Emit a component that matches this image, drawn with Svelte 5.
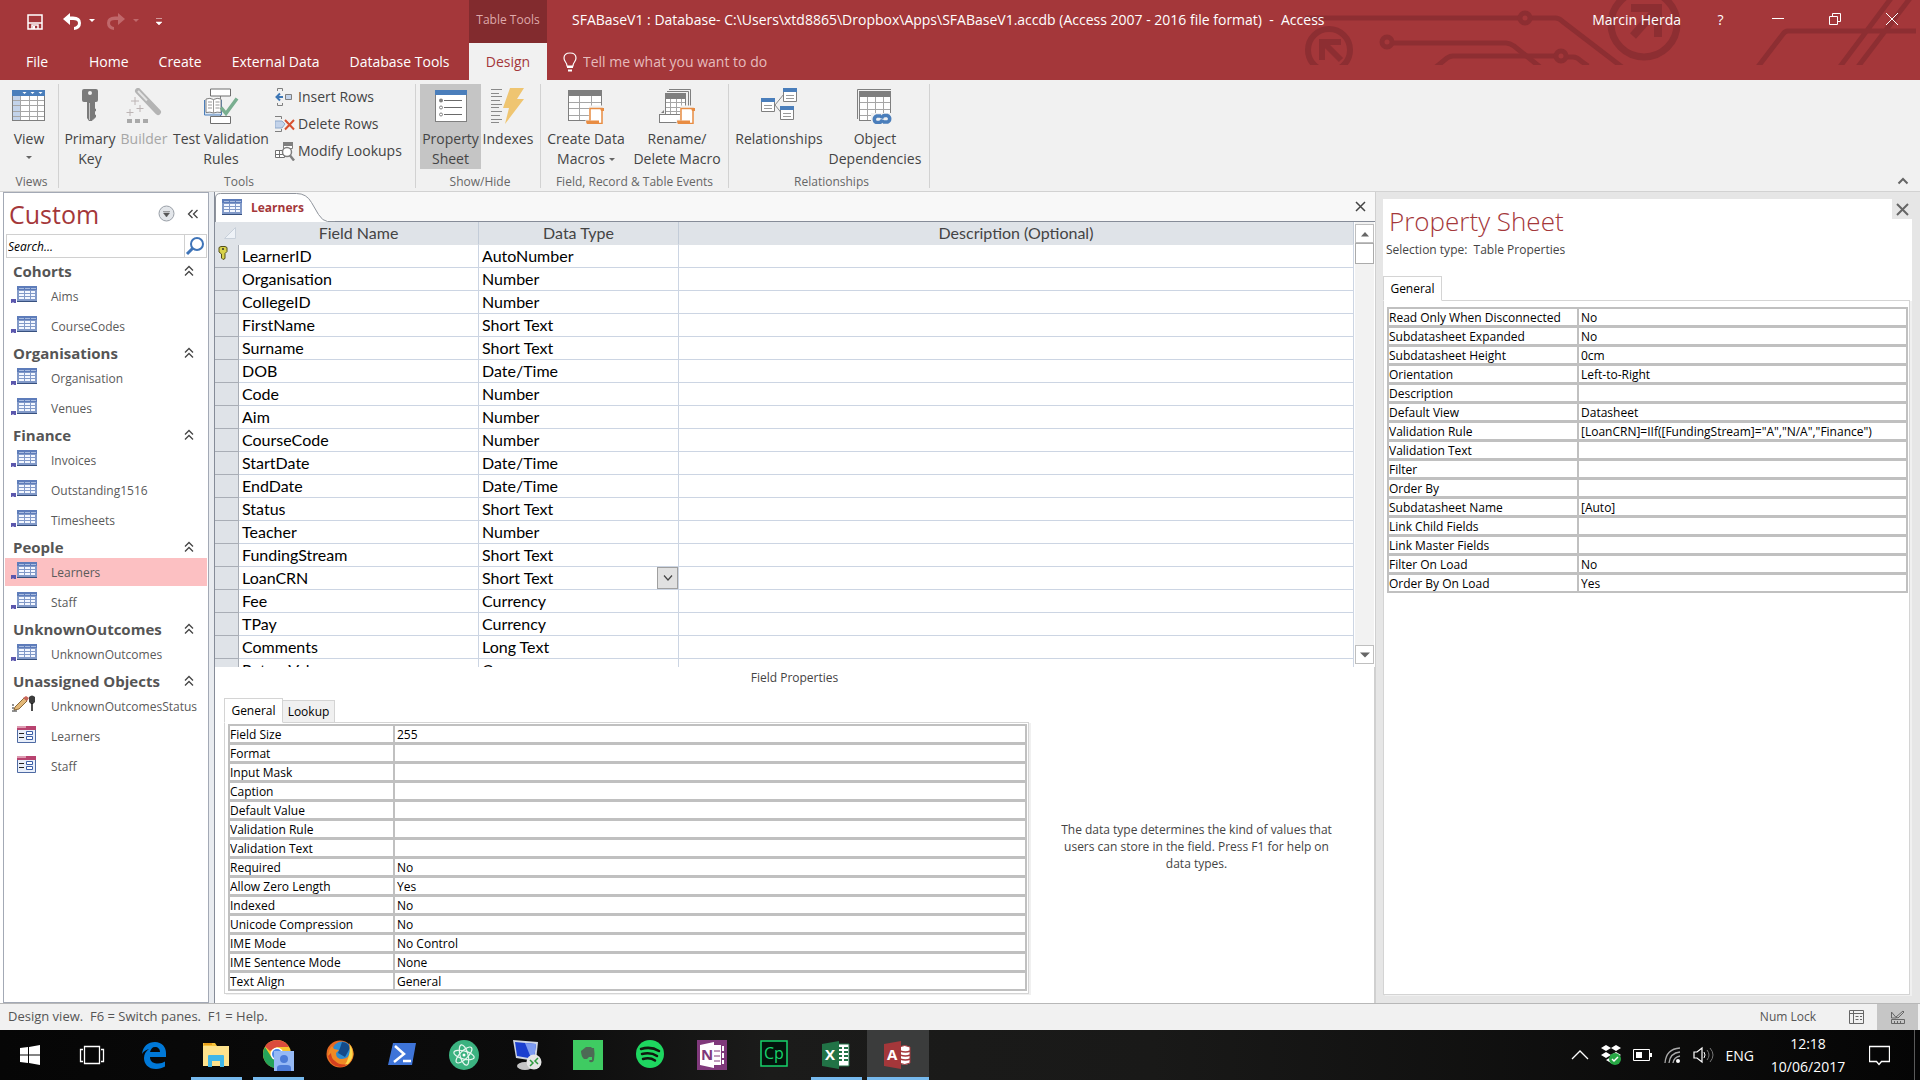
<script>
  const tabs = ['Home', 'Create', 'External Data', 'Database Tools'];

  const ribbon = [
    { label: 'Views', cls: 'views', items: [{ icon: 'view', lines: ['View'], w: 'w48', drop: true }] },
    {
      label: 'Tools',
      cls: 'tools',
      items: [
        { icon: 'key', lines: ['Primary', 'Key'], w: 'w54' },
        { icon: 'wand', lines: ['Builder'], w: 'w54', disabled: true },
        { icon: 'validate', lines: ['Test Validation', 'Rules'], w: 'w100' }
      ],
      small: [
        { icon: 'insert', text: 'Insert Rows' },
        { icon: 'delete', text: 'Delete Rows' },
        { icon: 'lookup', text: 'Modify Lookups' }
      ]
    },
    {
      label: 'Show/Hide',
      cls: 'show',
      items: [
        { icon: 'sheet', lines: ['Property', 'Sheet'], w: 'w61', active: true },
        { icon: 'indexes', lines: ['Indexes'], w: 'w54' }
      ]
    },
    {
      label: 'Field, Record & Table Events',
      cls: 'events',
      items: [
        { icon: 'macro', lines: ['Create Data', 'Macros'], w: 'w90', inlineDrop: true },
        { icon: 'rename', lines: ['Rename/', 'Delete Macro'], w: 'w92' }
      ]
    },
    {
      label: 'Relationships',
      cls: 'rel',
      items: [
        { icon: 'relations', lines: ['Relationships'], w: 'w90' },
        { icon: 'depend', lines: ['Object', 'Dependencies'], w: 'w102' }
      ]
    }
  ];

  const nav = [
    { name: 'Cohorts', items: [['table', 'Aims'], ['table', 'CourseCodes']] },
    { name: 'Organisations', items: [['table', 'Organisation'], ['table', 'Venues']] },
    { name: 'Finance', items: [['table', 'Invoices'], ['table', 'Outstanding1516'], ['table', 'Timesheets']] },
    { name: 'People', items: [['table', 'Learners', true], ['table', 'Staff']] },
    { name: 'UnknownOutcomes', items: [['table', 'UnknownOutcomes']] },
    { name: 'Unassigned Objects', items: [['query', 'UnknownOutcomesStatus'], ['form', 'Learners'], ['form', 'Staff']] }
  ];

  const fields = [
    ['LearnerID', 'AutoNumber'], ['Organisation', 'Number'], ['CollegeID', 'Number'],
    ['FirstName', 'Short Text'], ['Surname', 'Short Text'], ['DOB', 'Date/Time'],
    ['Code', 'Number'], ['Aim', 'Number'], ['CourseCode', 'Number'],
    ['StartDate', 'Date/Time'], ['EndDate', 'Date/Time'], ['Status', 'Short Text'],
    ['Teacher', 'Number'], ['FundingStream', 'Short Text'], ['LoanCRN', 'Short Text'],
    ['Fee', 'Currency'], ['TPay', 'Currency'], ['Comments', 'Long Text'], ['ReturnValue', 'Currency']
  ];

  const fieldProps = [
    ['Field Size', '255'], ['Format', ''], ['Input Mask', ''], ['Caption', ''],
    ['Default Value', ''], ['Validation Rule', ''], ['Validation Text', ''], ['Required', 'No'],
    ['Allow Zero Length', 'Yes'], ['Indexed', 'No'], ['Unicode Compression', 'No'],
    ['IME Mode', 'No Control'], ['IME Sentence Mode', 'None'], ['Text Align', 'General']
  ];

  const tableProps = [
    ['Read Only When Disconnected', 'No'], ['Subdatasheet Expanded', 'No'], ['Subdatasheet Height', '0cm'],
    ['Orientation', 'Left-to-Right'], ['Description', ''], ['Default View', 'Datasheet'],
    ['Validation Rule', '[LoanCRN]=IIf([FundingStream]="A","N/A","Finance")'], ['Validation Text', ''],
    ['Filter', ''], ['Order By', ''], ['Subdatasheet Name', '[Auto]'], ['Link Child Fields', ''],
    ['Link Master Fields', ''], ['Filter On Load', 'No'], ['Order By On Load', 'Yes']
  ];

  const apps = [
    ['taskview', 'Task View'], ['edge', 'Edge'], ['folder', 'File Explorer', 'open'], ['chrome', 'Chrome', 'open'],
    ['firefox', 'Firefox'], ['powershell', 'PowerShell'], ['atom', 'Atom'], ['remote', 'Remote Desktop'],
    ['evernote', 'Evernote'], ['spotify', 'Spotify'], ['onenote', 'OneNote'], ['captivate', 'Captivate'],
    ['excel', 'Excel', 'open'], ['access', 'Access', 'current']
  ];
</script>

{#snippet grid(x, y, w, h, cols, rows, head, side)}
  <rect x={x + 0.5} y={y + 0.5} width={w - 1} height={h - 1} fill="#fff" stroke="#7f7f7f" />
  {#if side}<rect x={x + 1} y={y + 5} width="8" height={h - 6} fill="#c3d3ea" />{/if}
  {#each Array(cols - 1) as _, i}
    <path d="M{x + Math.round(((i + 1) * w) / cols) + 0.5} {y + 5}v{h - 6}" stroke="#a6a6a6" />
  {/each}
  {#each Array(rows - 1) as _, i}
    <path d="M{x + 1} {y + 5 + Math.round(((i + 1) * (h - 5)) / rows) + 0.5}h{w - 2}" stroke="#a6a6a6" />
  {/each}
  <rect {x} {y} width={w} height="6" fill={head} />
{/snippet}

{#snippet scroll(x, y)}
  <path d="M{x + 5} {y}h13v4h-2v14h-15v-4h3z" fill="#f1f1f1" stroke="#f1f1f1" stroke-width="3" />
  <path d="M{x + 4} {y + 13.5}V{y + 1.5}h12v15h-4" fill="#fff" stroke="#e88c42" stroke-width="1.5" />
  <path d="M{x + 14} {y + 1}h4v3h-3z" fill="#e88c42" />
  <path d="M{x} {y + 13.5}h13v2.5q0 2 2 2.500h-12q-3-1-3-5z" fill="#e88c42" />
{/snippet}

{#snippet big(name)}
  <svg class="big-icon" viewBox="0 0 36 36" aria-hidden="true">
    {#if name === 'view'}
      {@render grid(1, 2, 33, 31, 4, 5, '#4a7ebb', true)}
      <path d="M11.500 4h4l-2 2zM19.500 4h4l-2 2zM27.500 4h4l-2 2z" fill="#fff" />
    {:else if name === 'key'}
      <path fill-rule="evenodd" d="M12 1h12q2 0 2 2v9q0 2-2 2h-1v14l-3 5h-3l-2-3V14h-3q-2 0-2-2V3q0-2 2-2zM18 3a2 2 0 100 4 2 2 0 000-4z" fill="#7b7b7b" />
      <path d="M17.500 15v17" stroke="#c8c8c8" />
      <path d="M22 20l2 1v2l-2 1v2l2 1v2l-3 3" fill="#7b7b7b" />
    {:else if name === 'wand'}
      <path d="M12 3l20 21" stroke="#b4b4b4" stroke-width="6" stroke-linecap="round" />
      <path d="M12 3l9 9.500" stroke="#e4e4e4" stroke-width="2" />
      <path d="M9 9v8M5 13h8M14 17v7M10.500 20.500h7M4 21v7M.5 24.500h7" stroke="#bcb4b4" />
      <path d="M1 31h5v4H1zM9 31h5v4H9zM17 31h5v4h-5z" fill="#a9a9a9" />
    {:else if name === 'validate'}
      <path d="M17.500 8v3M17.500 25v5" stroke="#7f7f7f" />
      <path d="M7.500 1h20v7h-20zM7.500 28.500h20v7h-20z" fill="#fff" stroke="#6f6f6f" />
      <path d="M1.500 12v15h17V12" fill="#d9e5f3" stroke="#4a7ebb" />
      <path d="M3 11q4-1.500 7.500.5Q14 9.500 18 11v13.500q-4-1-7.500.5Q7 23.500 3 24.500z" fill="#fff" stroke="#7f7f7f" />
      <path d="M10.500 12v13M5 14h4M5 17h4M5 20h4M12.500 14h4M12.500 17h4M12.500 20h4" stroke="#999" />
      <path d="M18 19.500l5 6 11-15" fill="none" stroke="#79ae90" stroke-width="3.500" />
    {:else if name === 'sheet'}
      <rect x="2.500" y="2.500" width="31" height="31" fill="#fff" stroke="#7f7f7f" />
      <path d="M2 2h32v5H2z" fill="#4a7ebb" />
      <path d="M11 12.500h18M11 19.500h18M11 26.500h18" stroke="#6a6a6a" />
      <circle cx="8" cy="12.500" r="2" fill="#7f7f7f" />
      <circle cx="8" cy="19.500" r="1.500" fill="#fff" stroke="#7f7f7f" />
      <circle cx="8" cy="26.500" r="1.500" fill="#fff" stroke="#7f7f7f" />
    {:else if name === 'indexes'}
      <path d="M1 1.500h11M1 5.500h8M1 8.500h11M1 12.500h9M1 16.500h11M1 19.500h8M1 23.500h11M1 27.500h9M1 31.500h11M1 34.500h8" stroke="#8a8a8a" />
      <path d="M20 0h14l-7 11h7L15 36l4-16h-6z" fill="#efc571" />
    {:else if name === 'macro'}
      {@render grid(0, 2, 34, 31, 3, 4, '#7f7f7f', false)}
      {@render scroll(18, 19)}
    {:else if name === 'rename'}
      <path d="M10 1.500h21.500V18" fill="none" stroke="#7f7f7f" />
      <path d="M8 3.500h21.500V18" fill="none" stroke="#7f7f7f" />
      {@render grid(6, 5, 21, 22, 4, 4, '#7f7f7f', false)}
      <rect x=".5" y="26.500" width="24" height="8" fill="#fff" stroke="#7f7f7f" />
      <path d="M2 25l3-3v3z" fill="#7f7f7f" />
      {@render scroll(18, 19)}
    {:else if name === 'relations'}
      <path d="M14 17L23 6M14 17l8 10" stroke="#8a8a8a" fill="none" />
      <path d="M.5 10.500h13v13H.5zM22.500.5h13v13h-13zM19.500 18.500h13v13h-13z" fill="#fff" stroke="#7f7f7f" />
      <path d="M0 10h14v4H0zM22 0h14v4H22zM19 18h14v4H19z" fill="#4a7ebb" />
      <path d="M3 17.500h8M3 20.500h8M25 7.500h8M25 10.500h8M22 25.500h8M22 28.500h8" stroke="#9a9a9a" />
    {:else if name === 'depend'}
      <path d="M.5 31V1.500H34" fill="none" stroke="#7f7f7f" />
      {@render grid(2, 3, 32, 30, 4, 4, '#7f7f7f', false)}
      <path d="M14 25h22v11H14z" fill="#f1f1f1" />
      <g fill="none" stroke="#4a7ebb" stroke-width="3.500">
        <path d="M24 28h-4.500a3.500 3.500 0 000 6.500h3a4 4 0 003-3" />
        <path d="M26 34h4.500a3.500 3.500 0 000-6.500h-3a4 4 0 00-3 3" />
      </g>
    {/if}
  </svg>
{/snippet}

{#snippet little(name)}
  <svg class="small-icon" viewBox="0 0 20 20" aria-hidden="true">
    {#if name === 'insert'}
      <path d="M2.500 4V1.500h5V4M2.500 16v2.500h5V16" fill="none" stroke="#7f7f7f" />
      <path d="M10.500 7.500h6v5h-6z" fill="#c3d3ea" stroke="#7f7f7f" />
      <path d="M8 10H2M5 6.500L1.500 10 5 13.500" fill="none" stroke="#3c76b5" stroke-width="2" />
    {:else if name === 'delete'}
      <path d="M0 2.500h6.500V5M0 17.500h6.500V15" fill="none" stroke="#7f7f7f" />
      <path d="M0 7h7l3 3-3 4H0z" fill="#c3d3ea" stroke="#8fa9cc" />
      <path d="M10 6l9 9.500M19 6l-9 9.500" stroke="#d7502f" stroke-width="2" />
    {:else}
      <path d="M8.500 1.500h9v6h-9z" fill="#fff" stroke="#7f7f7f" />
      <path d="M8 1h10v4H8z" fill="#7f7f7f" />
      <path d="M.5 9.500h9v7h-9zM.5 13.500h9M4.500 9.500v7" fill="#fff" stroke="#6f6f6f" />
      <circle cx="12" cy="11" r="4.500" fill="#fff" stroke="#7f7f7f" stroke-width="1.500" />
      <path d="M15 14.500l4 5" stroke="#7f7f7f" stroke-width="2.500" />
    {/if}
  </svg>
{/snippet}

{#snippet objectIcon(name)}
  <svg class="object-icon" viewBox="0 0 28 20" aria-hidden="true">
    {#if name === 'table' || name === 'doc'}
      {#if name === 'table'}
        <path d="M1 14h5v4H4l-1-1-1 1H1z" fill="#5b57ad" />
      {/if}
      <rect x="7" y="1" width="20" height="16" fill="#8199c8" />
      <rect x="7" y="1" width="20" height="4" fill="#5d7cba" />
      <path d="M9 3h5v1H9zM15 3h5v1h-5zM21 3h5v1h-5z" fill="#a9bce0" />
      <path d="M9 6h5v2H9zM15 6h5v2h-5zM21 6h4v2h-4zM9 9h5v2H9zM15 9h5v2h-5zM21 9h4v2h-4zM9 12h5v2H9zM15 12h5v2h-5zM21 12h4v2h-4z" fill="#f3f7ff" />
      <path d="M7 16h20v1H7z" fill="#37517f" />
    {:else if name === 'query'}
      <path d="M5 12l9-9 3 3-8 8-5 1z" fill="#e3b878" stroke="#8b6a3a" />
      <path d="M13 3l3-2 3 2-2 3z" fill="#c8665a" />
      <path d="M2 10h2M2 13h2M2 16h5" stroke="#222" />
      <path d="M19 2q3-3 6 0v5l-2 2h-2l-2-2z" fill="#3c3c3c" />
      <path d="M22 8v8" stroke="#111" stroke-width="1.500" />
    {:else}
      <path d="M7.500 1.500h18v16h-18z" fill="#e9effa" stroke="#4e6aa3" />
      <path d="M7 1h19v4H7z" fill="#b8436f" />
      <path d="M7 1h9v2H7z" fill="#dd9ab1" />
      <path d="M9 8.500h5M9 12.500h5" stroke="#222" />
      <path d="M16.500 6.500h6v3h-6zM16.500 11.500h6v3h-6z" fill="#fff" stroke="#3b5ea8" />
    {/if}
  </svg>
{/snippet}

{#snippet app(name)}
  <svg class="app-icon" viewBox="0 0 32 32" aria-hidden="true">
    {#if name === 'taskview'}
      <path d="M8.500 7.500h15v17h-15zM7 10.500H4.500v12H7M25 10.500h2.500v12H25" fill="none" stroke="#fff" stroke-width="1.300" />
    {:else if name === 'edge'}
      <path d="M4 15C5 7 10 3 17 3c7 0 11 5 11 11v4H12c0 5 4 6.500 8 6.500 3 0 5-1 7-2v5c-3 1.500-5 2.500-9 2.500-8 0-12-5-12-11 0-4 2-7 5-9-3 1-5 2-7 5zm8-2h10c0-3-2-5-5-5s-4 2-5 5z" fill="#0078d7" />
    {:else if name === 'folder'}
      <path d="M3 4h12l2 3h12v20H3z" fill="#f5c33b" />
      <path d="M3 7h26v20H3z" fill="#fde28c" />
      <path d="M4 4h8v2H4z" fill="#e89f1d" />
      <path d="M8 17q0-1 1-1h14q1 0 1 1v11h-4v-6h-8v6H8z" fill="#3fb6e8" />
    {:else if name === 'chrome'}
      <circle cx="15" cy="15" r="14" fill="#f9c42e" />
      <path d="M15 1a14 14 0 0112 7H15l-7 4-5-4.500A14 14 0 0115 1z" fill="#db4b3c" />
      <path d="M3 8l7 11 5 3-2 7A14 14 0 013 8z" fill="#24a35a" />
      <circle cx="15" cy="15" r="6.500" fill="#fff" /><circle cx="15" cy="15" r="5" fill="#4a86e8" />
      <path d="M12 12h20v21H12z" fill="#96b9f5" />
      <circle cx="22" cy="20" r="4" fill="#4d7cd8" /><path d="M15 32v-3q0-3 4-3h6q4 0 4 3v3z" fill="#4d7cd8" />
    {:else if name === 'firefox'}
      <circle cx="16" cy="15" r="13.500" fill="#e66a22" />
      <circle cx="18" cy="12" r="9.500" fill="#2d8bd0" />
      <path d="M18 3q6 0 8 6l-5 9-7-4 2-5z" fill="#134a8a" />
      <path d="M25 4q6 7 4 14-3 9-12 10-12 0-13-12 1-6 4-9l2 3 5 1-3 3q0 6 6 6 8-1 8-8z" fill="#f08a24" />
      <path d="M26 6q4 6 2 13-3 7-8 8 6-7 6-21z" fill="#fbd84b" />
      <path d="M4 17q2 10 12 11 5 0 8-3-8 2-13-3-4-3-4-8z" fill="#d5401f" />
    {:else if name === 'powershell'}
      <path d="M7 4h23l-4 22H2z" fill="#3e74d8" />
      <path d="M9 7l9 8-10 8M17 22h8" fill="none" stroke="#fff" stroke-width="2.500" />
    {:else if name === 'atom'}
      <circle cx="16" cy="16" r="15" fill="#3bb280" />
      <g fill="none" stroke="#e8f7f0" stroke-width="1.200"><ellipse cx="16" cy="16" rx="10.500" ry="4" transform="rotate(15 16 16)" /><ellipse cx="16" cy="16" rx="10.500" ry="4" transform="rotate(75 16 16)" /><ellipse cx="16" cy="16" rx="10.500" ry="4" transform="rotate(135 16 16)" /></g>
      <circle cx="16" cy="16" r="1.500" fill="#fff" />
    {:else if name === 'remote'}
      <path d="M3 1l25 2-2 19-20-3z" fill="#cfd6e2" /><path d="M5 3l21 2-2 15-17-3z" fill="#1b3fcf" /><path d="M15 4l11 1-2 15-3-1z" fill="#7d9bf0" />
      <ellipse cx="15" cy="27" rx="8" ry="4" fill="#c4c4c4" />
      <circle cx="24" cy="23" r="7.500" fill="#e6e6e6" /><path d="M20 21l3 3-3 3M28 19l-3 3 3 3" fill="none" stroke="#2f9a3f" stroke-width="1.500" />
    {:else if name === 'evernote'}
      <path d="M1 1h30v30H1z" fill="#3fcb62" />
      <path d="M9 12l5-4h5l1 1h2q1 5 0 12-1 3-4 2-2-1 0-2h2v-3h-3l-2 2h-3q-3-3-3-8z" fill="#4d6a55" />
    {:else if name === 'spotify'}
      <circle cx="16" cy="15" r="14" fill="#1ed760" />
      <path d="M7 10q10-3 18 2M8 15q9-2 15 2M9 20q7-2 12 1.500" fill="none" stroke="#10180f" stroke-width="2.500" stroke-linecap="round" />
    {:else if name === 'onenote'}
      <path d="M1 1h30v30H1z" fill="#80397b" />
      <path d="M18 6h7v20h-7zM26 7h2v5h-2zM26 14h2v5h-2zM26 21h2v4h-2z" fill="#fff" />
      <path d="M18 12h6M18 17h6M18 22h6" stroke="#80397b" />
      <path d="M4 6l14-3v26L4 26z" fill="#fff" />
      <text x="5" y="21" class="glyph" fill="#80397b">N</text>
    {:else if name === 'captivate'}
      <rect x="3" y="2" width="26" height="25" fill="#03140c" stroke="#17d36b" stroke-width="1.500" />
      <text x="6" y="20" class="glyph thin" fill="#17d36b">Cp</text>
    {:else if name === 'excel'}
      <path d="M17 5h12v22H17z" fill="#fff" stroke="#217346" />
      <path d="M18 9h4M18 13h4M18 17h4M18 21h4M24 9h4M24 13h4M24 17h4M24 21h4" stroke="#217346" stroke-width="2" />
      <path d="M2 5l17-3v28L2 27z" fill="#217346" />
      <text x="5" y="21" class="glyph" fill="#fff">X</text>
    {:else}
      <path d="M17 8q6-3 11 0v16q-5 3-11 0z" fill="#fff" stroke="#a4373a" />
      <path d="M18 12q6 2 10 0M18 16q6 2 10 0M18 20q6 2 10 0" fill="none" stroke="#a4373a" stroke-width="1.500" />
      <path d="M2 5l17-3v28L2 27z" fill="#a4373a" />
      <text x="5" y="21" class="glyph" fill="#fff">A</text>
    {/if}
  </svg>
{/snippet}

{#snippet propertyGrid(rows, id)}
  <div class="props {id}">
    {#each rows as [label, value], i}
      <label for="{id}{i}">{label}</label>
      <input id="{id}{i}" type="text" {value} />
    {/each}
  </div>
{/snippet}

<div class="window">
  <header>
    <svg class="circuit" viewBox="0 0 620 65" aria-hidden="true">
      <g fill="none" stroke="#8d2e32" stroke-width="5">
        <path d="M5 18h215M230 18h25q4 0 7 3l60 46" />
        <circle cx="225" cy="18" r="5" />
        <circle cx="29" cy="50" r="21" stroke-width="6" />
        <path d="M41 42H22v18M23 42l18 18" stroke-width="6" />
        <circle cx="87" cy="42" r="5" />
        <path d="M92 43h114q4 0 8 3l26 21" />
        <path d="M136 67l11-9q3-2 6-2h103M266 57h7q4 0 8 4l7 5" />
        <circle cx="261" cy="56" r="5" />
        <circle cx="344" cy="24" r="33" stroke-width="7" />
        <path d="M331 8h27v29M357 9l-24 27" stroke-width="8" />
        <path d="M457 68l26-34q2-3 5-3h128M539 68L592-3M557 68L611-3" />
      </g>
    </svg>
    <div class="titlebar">
      <div class="quick">
        <button aria-label="Save"><svg width="16" height="16" viewBox="0 0 16 16"><path d="M1 1h14v14H1zM1 9h14M5 15v-4h6v4" fill="none" stroke="#fff" stroke-width="1.500" /><path d="M6 12h2v3H6z" fill="#fff" /></svg></button>
        <button aria-label="Undo" class="undo"><svg width="34" height="18" viewBox="0 0 34 18"><path d="M0 6l7-6v3.500h3q8 0 8 6.500 0 6-7 7v-3q4-1 4-4 0-3-5-3H7v5z" fill="#fff" /><path d="M26 6h6l-3 3z" fill="#fff" /></svg></button>
        <button aria-label="Redo" class="redo"><svg width="34" height="18" viewBox="0 0 34 18"><path d="M18 6l-7-6v3.500H8q-8 0-8 6.500 0 6 7 7v-3q-4-1-4-4 0-3 5-3h3v5z" fill="#c0686b" /><path d="M26 6h6l-3 3z" fill="#c0686b" /></svg></button>
        <button aria-label="Customise toolbar"><svg width="8" height="10" viewBox="0 0 8 10"><path d="M1 1.500h6M1 5h6L4 8z" fill="#fff" stroke="#fff" stroke-width=".5" /></svg></button>
      </div>
      <div class="context">Table Tools</div>
      <h1>SFABaseV1 : Database- C:\Users\xtd8865\Dropbox\Apps\SFABaseV1.accdb (Access 2007 - 2016 file format)&nbsp; -&nbsp; Access</h1>
      <span class="user">Marcin Herda</span>
      <div class="controls">
        <button aria-label="Help">?</button>
        <button aria-label="Minimise"><svg width="14" height="14"><path d="M1 6.500h12" stroke="#fff" /></svg></button>
        <button aria-label="Restore"><svg width="14" height="14"><path d="M1.500 4.500h8v8h-8zM4.500 4V1.500h8v8H10" fill="none" stroke="#fff" /></svg></button>
        <button aria-label="Close"><svg width="14" height="14"><path d="M1 1l12 12M13 1L1 13" stroke="#fff" /></svg></button>
      </div>
    </div>
    <nav class="tabs">
      <div class="maintabs">
        <button class="file">File</button>
        {#each tabs as t}<button>{t}</button>{/each}
      </div>
      <button class="selected">Design</button>
      <label class="tell">
        <svg width="14" height="20" viewBox="0 0 14 20" aria-hidden="true"><path d="M4 14q0-2-1.500-4T1 6q0-5 6-5t6 5q0 2-1.500 4T10 14z" fill="none" stroke="#fff" stroke-width="1.200" /><path d="M4 15h6M5 18.500h4" stroke="#fff" stroke-width="2" /></svg>
        <input type="text" placeholder="Tell me what you want to do" aria-label="Tell me what you want to do" />
      </label>
    </nav>
  </header>

  <section class="ribbon">
    {#each ribbon as g}
      <div class="group {g.cls}">
        <div class="commands">
          {#each g.items as b}
            <button class="cmd {b.w}" class:active={b.active} disabled={b.disabled}>
              {@render big(b.icon)}
              {#each b.lines as line, i}
                <span>{line}{#if b.inlineDrop && i === 1}<i class="caret inline"></i>{/if}</span>
              {/each}
              {#if b.drop}<i class="caret"></i>{/if}
            </button>
          {/each}
          {#if g.small}
            <div class="stack">
              {#each g.small as s}
                <button>{@render little(s.icon)}{s.text}</button>
              {/each}
            </div>
          {/if}
        </div>
        <div class="caption">{g.label}</div>
      </div>
    {/each}
    <button class="collapse" aria-label="Collapse ribbon"><svg width="12" height="8"><path d="M1.500 6.500L6 2l4.500 4.500" fill="none" stroke="#666" stroke-width="2" /></svg></button>
  </section>

  <main>
    <aside class="navpane">
      <div class="navhead">
        <h2>Custom</h2>
        <button aria-label="Navigation options"><svg width="17" height="17"><circle cx="8.500" cy="8.500" r="7.500" fill="#e3e6ea" stroke="#9aa0a8" /><path d="M5 6.500h7M5.500 8h6l-3 4z" fill="#555" stroke="#555" stroke-width=".5" /></svg></button>
        <button aria-label="Collapse pane"><svg width="12" height="10"><path d="M5.500 1L1.500 5l4 4M10.500 1l-4 4 4 4" fill="none" stroke="#444" stroke-width="1.300" /></svg></button>
      </div>
      <div class="search">
        <input type="text" placeholder="Search..." aria-label="Search" />
        <button aria-label="Search"><svg width="20" height="20"><circle cx="12" cy="8" r="6" fill="none" stroke="#3f74b8" stroke-width="2" /><path d="M8 12l-6 6" stroke="#3f74b8" stroke-width="3" /></svg></button>
      </div>
      {#each nav as g}
        <button class="navgroup">{g.name}<svg width="10" height="12"><path d="M1 5.500L5 1.500l4 4M1 10.500l4-4 4 4" fill="none" stroke="#444" stroke-width="1.300" /></svg></button>
        {#each g.items as [icon, label, on]}
          <button class="navitem" class:on>{@render objectIcon(icon)}<span>{label}</span></button>
        {/each}
      {/each}
    </aside>
    <div class="splitter"></div>

    <section class="document">
      <div class="doctabs">
        <button class="doctab">
          <svg class="tabshape" width="120" height="30" aria-hidden="true"><path d="M.5 30V6q0-4.500 5-4.500h76q10 0 15 9l7 12q4 6 9 6h7.500V30z" fill="#fff" /><path d="M.5 30V6q0-4.500 5-4.500h76q10 0 15 9l7 12q4 6.500 9 7h7.500" fill="none" stroke="#8f949c" /></svg>
          {@render objectIcon('doc')}<span>Learners</span>
        </button>
        <button class="docclose" aria-label="Close document"><svg width="11" height="11"><path d="M1 1l9 9M10 1l-9 9" stroke="#444" stroke-width="1.500" /></svg></button>
      </div>
      <div class="design">
        <div class="clip">
          <table>
            <colgroup><col class="c0" /><col class="c1" /><col class="c2" /><col /></colgroup>
            <thead>
              <tr>
                <th aria-label="Row selector"><svg width="12" height="12"><path d="M11.500.5v11H.5z" fill="#eef2f7" stroke="#c8d0da" /></svg></th>
                <th>Field Name</th><th>Data Type</th><th>Description (Optional)</th>
              </tr>
            </thead>
            <tbody>
              {#each fields as [name, type], i}
                <tr>
                  <th>
                    {#if i === 0}<svg class="pk" width="10" height="14"><path d="M1 1.500L3 .5h4l2 1v4L7 7.500v5L5 13.500 3.500 12V8L1 6z" fill="#d8d24a" stroke="#55501a" /><circle cx="5" cy="3" r="1" fill="#333" /></svg>{/if}
                  </th>
                  <td>{name}</td>
                  <td><div class="type">{type}{#if name === 'LoanCRN'}<button aria-label="Choose data type"><svg width="10" height="8"><path d="M1 1.500l4 4.500 4-4.500" fill="none" stroke="#444" stroke-width="1.200" /></svg></button>{/if}</div></td>
                  <td></td>
                </tr>
              {/each}
            </tbody>
          </table>
        </div>
        <div class="scrollbar">
          <button aria-label="Scroll up"><svg width="10" height="6"><path d="M1 5.500h8L5 1z" fill="#666" /></svg></button>
          <div class="thumb"></div>
          <button class="down" aria-label="Scroll down"><svg width="10" height="6"><path d="M0 .5h10L5 5.500z" fill="#666" /></svg></button>
        </div>
      </div>
      <div class="lower">
        <h3>Field Properties</h3>
        <div class="lowerrow">
          <div class="tabbed">
            <div class="minitabs"><button class="front">General</button><button class="back">Lookup</button></div>
            <div class="panel">{@render propertyGrid(fieldProps, 'fp')}</div>
          </div>
          <p>The data type determines the kind of values that users can store in the field. Press F1 for help on data types.</p>
        </div>
      </div>
    </section>

    <aside class="sheet">
      <div class="sheetbody">
        <div class="sheethead">
          <h2>Property Sheet</h2>
          <button aria-label="Close property sheet"><svg width="13" height="13"><path d="M1 1l11 11M12 1L1 12" stroke="#666" stroke-width="2" /></svg></button>
        </div>
        <p>Selection type:&nbsp; Table Properties</p>
        <div class="minitabs"><button class="front">General</button></div>
        <div class="panel">{@render propertyGrid(tableProps, 'tp')}</div>
      </div>
    </aside>
  </main>

  <footer class="status">
    <span>Design view.&nbsp; F6 = Switch panes.&nbsp; F1 = Help.</span>
    <span class="num">Num Lock</span>
    <button aria-label="Datasheet view"><svg width="15" height="14"><path d="M.5.5h14v13H.5zM.5 3.500h14M4.500.5v13M6.500 6.500h3M11 6.500h2M6.500 9.500h3M11 9.500h2" fill="none" stroke="#666" /></svg></button>
    <button class="on" aria-label="Design view"><svg width="16" height="15"><path d="M1.500 2v6h5zM6 7l7-6 1 1-6 6zM1.500 9.500h13v4h-13zM4.500 11v2M7.500 11v2M10.500 11v2" fill="none" stroke="#666" /></svg></button>
  </footer>

  <footer class="taskbar">
    <button class="start" aria-label="Start"><svg width="20" height="20"><path d="M0 3l8-1v7.500H0zM9 2l11-2v9.500H9zM0 10.500h8V18l-8-1zM9 10.500h11V20L9 18z" fill="#fff" /></svg></button>
    {#each apps as [icon, label, state]}
      <button class="app {state ?? ''}" aria-label={label}>{@render app(icon)}</button>
    {/each}
    <div class="tray">
      <button aria-label="Hidden icons"><svg width="18" height="10"><path d="M1 9l8-8 8 8" fill="none" stroke="#fff" stroke-width="1.300" /></svg></button>
      <button aria-label="Dropbox"><svg width="20" height="20"><path d="M5 0l5 3-5 3-5-3zM15 0l5 3-5 3-5-3zM5 7l5 3-5 3-5-3zM15 7l5 3-5 3-5-3zM10 12l4 3-4 3-5-3z" fill="#fff" /><circle cx="14" cy="14" r="6" fill="#28a745" /><path d="M11 14l2 2 4-4" fill="none" stroke="#fff" stroke-width="1.500" /></svg></button>
      <button aria-label="Battery"><svg width="19" height="12"><path d="M.5.5h16v11H.5z" fill="none" stroke="#fff" /><path d="M17 4h2v4h-2zM3 3h6v6H3z" fill="#fff" /></svg></button>
      <button aria-label="Wi-Fi"><svg width="17" height="17"><g fill="none" stroke="#aaa" stroke-width="1.300"><path d="M1 16Q2 2 16 1M5 16Q6 6 16 5M9 16q1-6 7-7" /></g><circle cx="14" cy="14" r="2" fill="#fff" /></svg></button>
      <button aria-label="Volume"><svg width="21" height="18"><path d="M1 6h3l5-4v14l-5-4H1z" fill="none" stroke="#fff" stroke-width="1.200" /><path d="M11 6q2 3 0 6" fill="none" stroke="#fff" /><path d="M14 4q4 5 0 10M17 2q6 7 0 14" fill="none" stroke="#777" /></svg></button>
      <button class="lang">ENG</button>
      <button class="clock"><span>12:18</span><span>10/06/2017</span></button>
      <button class="notify" aria-label="Notifications"><svg width="21" height="21"><path d="M.5 1.500h20v15h-8L10 19.500 7.500 16.500h-7z" fill="none" stroke="#fff" stroke-width="1.300" /></svg></button>
      <div class="peek"></div>
    </div>
  </footer>
</div>

<style>
  :global(body) { margin: 0; }
  .window {
    height: 100vh;
    min-height: 840px;
    display: flex;
    flex-direction: column;
    overflow: hidden;
    font-family: "Open Sans", "Noto Sans", sans-serif;
    font-size: 12px;
    color: #444;
    background: #fff;
  }
  * { box-sizing: border-box; }
  svg { display: block; flex: none; }
  button, input {
    font: inherit;
    color: inherit;
    background: none;
    border: 0;
    padding: 0;
    margin: 0;
    border-radius: 0;
    min-width: 0;
  }
  h1, h2, h3, p { margin: 0; font-weight: 400; }

  header { position: relative; background: #a4373a; color: #fff; font-size: 14px; }
  .circuit { position: absolute; top: 0; right: 0; width: 620px; height: 65px; }
  .titlebar { position: relative; display: flex; height: 43px; }
  .quick { width: 469px; display: flex; align-items: center; padding-left: 27px; }
  .quick button { margin-right: 20px; }
  .quick .undo { margin-right: 10px; }
  .quick .redo { margin-right: 14px; }
  .context { width: 78px; background: #822b2e; color: #dfa9aa; font-size: 12px; display: flex; align-items: center; justify-content: center; padding-bottom: 4px; }
  h1 { flex: 1; padding-left: 25px; font-size: 14px; line-height: 39px; white-space: nowrap; }
  .user { line-height: 39px; margin-right: 11px; }
  .controls { display: flex; height: 38px; }
  .controls button { width: 57px; display: flex; align-items: center; justify-content: center; }
  .tabs { position: relative; display: flex; height: 37px; }
  .maintabs { display: flex; width: 469px; }
  .tabs button { padding: 0 15px; }
  .tabs .file { width: 74px; }
  .tabs .selected { width: 78px; padding: 0; background: #f1f1f1; color: #a4373a; }
  .tell { display: flex; align-items: center; gap: 6px; padding-left: 16px; }
  .tell input { width: 240px; }
  .tell input::placeholder { color: #e6bcbd; opacity: 1; }

  .ribbon { display: flex; height: 112px; background: #f1f1f1; border-bottom: 1px solid #d2d2d2; font-size: 14px; }
  .group { margin: 4px 0 3px; border-right: 1px solid #d2d2d2; display: flex; flex-direction: column; justify-content: space-between; }
  .views { width: 59px; padding-left: 5px; }
  .tools { width: 357px; padding-left: 4px; }
  .show { width: 125px; padding-left: 4px; }
  .events { width: 188px; }
  .rel { width: 201px; padding-left: 5px; }
  .commands { display: flex; }
  .cmd { display: flex; flex-direction: column; align-items: center; height: 85px; padding-top: 4px; line-height: 20px; white-space: nowrap; }
  .cmd:disabled { color: #a6a6a6; }
  .active { background: #c5c5c5; }
  .w48 { width: 48px; } .w54 { width: 54px; } .w61 { width: 61px; } .w90 { width: 90px; }
  .w92 { width: 92px; } .w100 { width: 100px; } .w102 { width: 102px; }
  .big-icon { width: 36px; height: 36px; margin-bottom: 5px; }
  .caret { border: 3px solid transparent; border-top-color: #666; border-bottom: 0; margin-top: 7px; }
  .inline { display: inline-block; margin: 0 0 3px 4px; }
  .stack { display: flex; flex-direction: column; padding-left: 4px; }
  .stack button { display: flex; align-items: center; gap: 3px; height: 27px; padding-bottom: 2px; white-space: nowrap; }
  .small-icon { width: 20px; height: 20px; }
  .caption { text-align: center; font-size: 12px; line-height: 13px; color: #666; }
  .collapse { margin: auto 11px 6px auto; }

  main { flex: 1; min-height: 0; display: flex; }
  .navpane { width: 206px; margin-left: 3px; border: 1px solid #a3a9b5; padding: 0 1px; background: #fff; }
  .navhead { display: flex; align-items: center; height: 41px; padding: 0 8px 0 4px; gap: 12px; }
  .navhead h2 { flex: 1; font-size: 25px; line-height: 34px; color: #a4373a; }
  .search { display: flex; height: 24px; margin: 0 0 2px 1px; border: 1px solid #d0d0d0; }
  .search input { flex: 1; padding-left: 1px; font-style: italic; }
  .search input::placeholder { color: #000; opacity: 1; }
  .search button { width: 22px; border-left: 1px solid #d0d0d0; }
  .navgroup { display: flex; align-items: center; justify-content: space-between; width: 100%; height: 22px; padding: 0 13px 0 8px; font-size: 15px; font-weight: 700; color: #555; }
  .navitem { display: flex; align-items: center; gap: 13px; width: 100%; height: 28px; margin-bottom: 2px; padding-left: 5px; color: #5a5a5a; white-space: nowrap; }
  .navitem .object-icon { margin-bottom: 2px; }
  .on { background: #fcc0c2; }
  .object-icon { width: 28px; height: 20px; }
  .splitter { width: 6px; background: #e9ecf0; border-right: 1px solid #868c98; }

  .document { flex: 1; min-width: 0; display: flex; flex-direction: column; }
  .doctabs { display: flex; justify-content: space-between; align-items: center; height: 30px; background: #f8f8f8; border-bottom: 1px solid #868c98; }
  .doctab { position: relative; width: 120px; height: 30px; display: flex; align-items: center; gap: 8px; padding-top: 2px; font-weight: 700; color: #a4373a; }
  .tabshape { position: absolute; left: 0; top: 0; }
  .doctab span, .doctab .object-icon { position: relative; }
  .docclose { margin-right: 9px; }
  .design { flex: 1; min-height: 0; display: flex; font-family: Lato, "Open Sans", sans-serif; font-size: 16px; }
  .clip { flex: 1; min-width: 0; overflow: hidden; }
  table { width: 100%; table-layout: fixed; border-collapse: separate; border-spacing: 0; }
  .c0 { width: 24px; } .c1 { width: 240px; } .c2 { width: 200px; }
  th, td { height: 23px; padding: 0; line-height: 20px; font-weight: 400; border-right: 1px solid #ccd5e3; border-bottom: 1px solid #ccd5e3; }
  thead th { background: #dfe3e8; border-bottom-color: #dfe3e8; border-right-color: #c3ccd8; }
  thead th:first-child { border-right-color: #dfe3e8; padding-left: 9px; }
  tbody th { background: #dfe3e8; border-color: #a9aeb6; }
  tbody td { color: #000; padding-left: 3px; }
  .pk { margin: 0 0 6px 3px; }
  .type { display: flex; justify-content: space-between; height: 20px; }
  .type button { width: 21px; height: 22px; margin-top: -1px; background: #e1e1e1; border: 1px solid #a0a0a0; display: flex; align-items: center; justify-content: center; }
  .scrollbar { width: 21px; margin-bottom: 3px; padding: 2px 1px 0; display: flex; flex-direction: column; background: linear-gradient(#f2f2f2, #f2f2f2) 1px 0 / 19px 100% no-repeat; }
  .scrollbar button { height: 19px; background: #fff; border: 1px solid #bfbfbf; display: flex; align-items: center; justify-content: center; }
  .thumb { height: 21px; background: #fff; border: 1px solid #ababab; }
  .scrollbar .down { margin-top: auto; }

  .lower { border-right: 1px solid #d0d0d0; padding: 0 0 9px 9px; }
  h3 { font-size: 12px; line-height: 22px; text-align: center; padding-right: 9px; margin-bottom: 9px; }
  .lowerrow { display: flex; align-items: center; }
  .tabbed { flex: 0 0 70%; }
  .lowerrow p { flex: 1; text-align: center; line-height: 17px; padding: 0 36px 0 26px; }
  .minitabs { display: flex; align-items: flex-end; height: 25px; margin-bottom: -1px; position: relative; color: #000; }
  .minitabs button { border: 1px solid #d4d4d4; text-align: center; }
  .front { width: 59px; height: 25px; background: #fff; }
  .minitabs .front { border-bottom-color: #fff; }
  .back { width: 52px; height: 23px; background: #f0f0f0; }
  .minitabs .back { border-left: 0; }
  .panel { border: 1px solid #d4d4d4; box-shadow: 2px 1px 0 #f0f0f0; padding: 1px 1px 2px 3px; }
  .props { display: grid; background: #c0c0c0; padding: 2px; column-gap: 2px; row-gap: 3px; color: #000; }
  .fp { grid-template-columns: 163px 1fr; }
  .tp { grid-template-columns: 188px 1fr; }
  .props label, .props input { background: #fff; height: 16px; line-height: 16px; overflow: hidden; white-space: nowrap; }
  .props label { line-height: 18px; }
  .props input { width: 100%; padding: 1px 0 0 2px; }

  .sheet { flex: 0 0 545px; background: #e6e6e6; padding: 7px 8px 8px 7px; border-left: 1px solid #d0d0d0; display: flex; }
  .sheetbody { flex: 1; display: flex; flex-direction: column; background: #fff; }
  .sheethead { display: flex; justify-content: space-between; height: 41px; margin-bottom: 1px; }
  .sheethead h2 { padding: 4px 0 0 6px; font-size: 26px; line-height: 36px; font-weight: 300; color: #a4373a; }
  .sheethead button { width: 20px; height: 20px; background: #e6e6e6; display: flex; align-items: center; justify-content: center; }
  .sheetbody p { line-height: 17px; padding-left: 3px; margin-bottom: 18px; }
  .sheetbody .panel { flex: 1; margin-right: 2px; padding-top: 6px; }

  .status { display: flex; align-items: center; height: 27px; flex: none; background: #f1f1f1; border-top: 1px solid #b8b8b8; padding-left: 8px; font-size: 13px; padding-right: 2px; color: #555; }
  .status span { padding-bottom: 2px; }
  .status .num { margin-left: auto; font-size: 12px; padding-right: 20px; }
  .status button { width: 41px; height: 26px; display: flex; align-items: center; justify-content: center; }
  .status .on { background: #c6c6c6; }

  .taskbar { display: flex; height: 50px; flex: none; background: linear-gradient(90deg, #060606, #0c0c0c 28%, #1b1b1a 40%, #191918 60%, #050505); color: #fff; font-size: 14px; }
  .start { width: 61px; padding-right: 2px; display: flex; align-items: center; justify-content: center; }
  .app { position: relative; width: 62px; display: flex; align-items: center; justify-content: center; }
  .app-icon { width: 32px; height: 32px; }
  .open { background: linear-gradient(#76b9ed, #76b9ed) center bottom / 51px 3px no-repeat; }
  .current { background: linear-gradient(#76b9ed, #76b9ed) center bottom / 100% 3px no-repeat #3b3c3c; }
  .glyph { font: 700 15px "Open Sans", sans-serif; }
  .thin { font-weight: 400; font-size: 16px; }
  .tray { margin-left: auto; display: flex; align-items: center; gap: 12px; }
  .lang { margin-right: 4px; }
  .clock { display: flex; flex-direction: column; align-items: center; line-height: 23px; width: 76px; }
  .notify { margin: 0 12px 0 11px; }
  .peek { width: 6px; height: 50px; border-left: 1px solid #5a5a5a; }
</style>
